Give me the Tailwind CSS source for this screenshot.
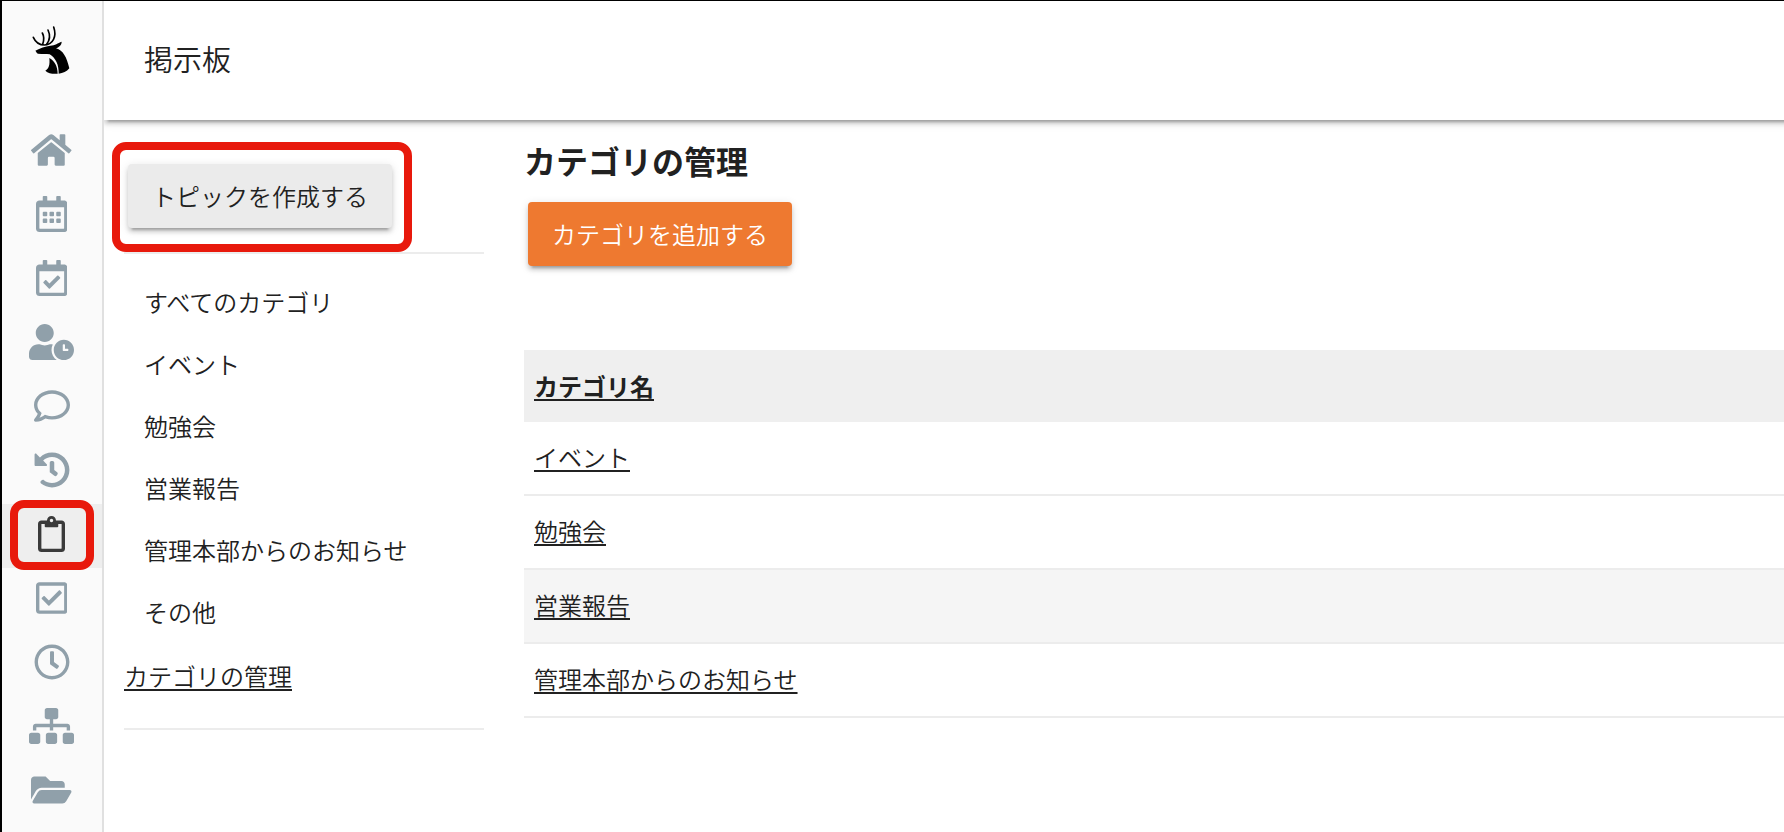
<!DOCTYPE html>
<html lang="ja">
<head>
<meta charset="utf-8">
<meta name="viewport" content="width=device-width, initial-scale=1">
<title>掲示板</title>
<script src="https://cdn.jsdelivr.net/npm/@tailwindcss/browser@4"></script>
</head>
<body class="flex min-h-screen overflow-x-hidden border-t border-l-2 border-black bg-white font-['Noto_Sans_CJK_JP',sans-serif] text-2xl font-[350] text-[#212121]">

<nav aria-label="メインメニュー" class="relative z-10 flex w-[102px] shrink-0 flex-col border-r-2 border-[#e0e0e0] bg-[#fafafa] text-[#90a0aa]">
  <a href="#" aria-label="トップ" class="flex h-[119px] justify-center pt-[22px] pr-0.5 text-black">
    <svg class="h-[54px] w-[42px]" viewBox="30 25 126 162" fill="none">
      <g stroke="currentColor" stroke-width="5" stroke-linecap="round">
        <path d="M40 68C47 84 59 91 74 91C99 89 111 66 101 37"/>
        <path d="M67 55C73 66 72 78 68 89"/>
        <path d="M84 46C91 61 89 77 80 89"/>
      </g>
      <path fill="currentColor" d="M46 108C61 100 75 95 91 93C106 92 113 85 125 81C125 92 116 98 108 101C130 108 140 127 148 161C140 171 129 176 116 177C117 151 107 130 89 119C78 117 68 119 54 117C50 115 49 111 46 108Z"/>
      <path fill="currentColor" d="M88 130C105 140 112 154 113 177C99 178 85 177 76 168C87 161 90 151 88 130Z"/>
    </svg>
  </a>
  <a href="#" aria-label="ホーム" class="flex h-16 items-center justify-center pr-px pb-1"><svg class="h-9 w-auto" viewBox="0 0 576 512" fill="currentColor"><path d="M280.37 148.26L96 300.11V464a16 16 0 0 0 16 16l112.06-.29a16 16 0 0 0 15.92-16V368a16 16 0 0 1 16-16h64a16 16 0 0 1 16 16v95.64a16 16 0 0 0 16 16.05L464 480a16 16 0 0 0 16-16V300L295.67 148.26a12.19 12.19 0 0 0-15.3 0zM571.6 251.47L488 182.56V44.05a12 12 0 0 0-12-12h-56a12 12 0 0 0-12 12v72.61L318.47 43a48 48 0 0 0-61 0L4.34 251.47a12 12 0 0 0-1.6 16.9l25.5 31A12 12 0 0 0 45.15 301l235.22-193.74a12.19 12.19 0 0 1 15.3 0L530.9 301a12 12 0 0 0 16.9-1.6l25.5-31a12 12 0 0 0-1.7-16.93z"/></svg></a>
  <a href="#" aria-label="カレンダー" class="flex h-16 items-center justify-center pr-px pb-1"><svg class="h-9 w-auto" viewBox="0 0 448 512" fill="currentColor"><path d="M148 288h-40c-6.6 0-12-5.4-12-12v-40c0-6.6 5.4-12 12-12h40c6.6 0 12 5.4 12 12v40c0 6.6-5.4 12-12 12zm108-12v-40c0-6.6-5.4-12-12-12h-40c-6.6 0-12 5.4-12 12v40c0 6.6 5.4 12 12 12h40c6.6 0 12-5.4 12-12zm96 0v-40c0-6.6-5.4-12-12-12h-40c-6.6 0-12 5.4-12 12v40c0 6.6 5.4 12 12 12h40c6.6 0 12-5.4 12-12zm-96 96v-40c0-6.6-5.4-12-12-12h-40c-6.6 0-12 5.4-12 12v40c0 6.6 5.4 12 12 12h40c6.6 0 12-5.4 12-12zm-96 0v-40c0-6.6-5.4-12-12-12h-40c-6.6 0-12 5.4-12 12v40c0 6.6 5.4 12 12 12h40c6.6 0 12-5.4 12-12zm192 0v-40c0-6.6-5.4-12-12-12h-40c-6.6 0-12 5.4-12 12v40c0 6.6 5.4 12 12 12h40c6.6 0 12-5.4 12-12zm96-260v352c0 26.5-21.5 48-48 48H48c-26.5 0-48-21.5-48-48V112c0-26.5 21.5-48 48-48h48V12c0-6.6 5.4-12 12-12h40c6.6 0 12 5.4 12 12v52h128V12c0-6.6 5.4-12 12-12h40c6.6 0 12 5.4 12 12v52h48c26.5 0 48 21.5 48 48zm-48 346V160H48v298c0 3.3 2.7 6 6 6h340c3.3 0 6-2.7 6-6z"/></svg></a>
  <a href="#" aria-label="予定の確認" class="flex h-16 items-center justify-center pr-px pb-1"><svg class="h-9 w-auto" viewBox="0 0 448 512" fill="currentColor"><path d="M400 64h-48V12c0-6.627-5.373-12-12-12h-40c-6.627 0-12 5.373-12 12v52H160V12c0-6.627-5.373-12-12-12h-40c-6.627 0-12 5.373-12 12v52H48C21.49 64 0 85.49 0 112v352c0 26.51 21.49 48 48 48h352c26.51 0 48-21.49 48-48V112c0-26.51-21.49-48-48-48zm-6 400H54a6 6 0 0 1-6-6V160h352v298a6 6 0 0 1-6 6zm-52.849-200.65L198.842 404.519c-4.705 4.667-12.303 4.637-16.971-.068l-75.091-75.699c-4.667-4.705-4.637-12.303.068-16.971l22.719-22.536c4.705-4.667 12.303-4.637 16.97.069l44.104 44.461 111.072-110.181c4.705-4.667 12.303-4.637 16.971.068l22.536 22.718c4.667 4.705 4.636 12.303-.069 16.97z"/></svg></a>
  <a href="#" aria-label="勤怠" class="flex h-16 items-center justify-center pr-px pb-1"><svg class="h-9 w-auto" viewBox="0 0 640 512" fill="currentColor"><path d="M496 224c-79.6 0-144 64.4-144 144s64.4 144 144 144 144-64.4 144-144-64.4-144-144-144zm64 150.3c0 5.3-4.4 9.7-9.7 9.7h-60.6c-5.3 0-9.7-4.4-9.7-9.7v-76.6c0-5.3 4.4-9.7 9.7-9.7h12.6c5.3 0 9.7 4.4 9.7 9.7V352h38.3c5.3 0 9.7 4.4 9.7 9.7v12.6zM320 368c0-27.8 6.7-54.1 18.2-77.5-8-1.5-16.2-2.5-24.6-2.5h-16.7c-22.2 10.2-46.9 16-72.9 16s-50.6-5.8-72.9-16h-16.7C60.2 288 0 348.2 0 422.4V464c0 26.5 21.5 48 48 48h347.1c-45.3-31.9-75.1-84.5-75.1-144zm-96-112c70.7 0 128-57.3 128-128S294.7 0 224 0 96 57.3 96 128s57.3 128 128 128z"/></svg></a>
  <a href="#" aria-label="チャット" class="flex h-16 items-center justify-center pr-px pb-1"><svg class="h-9 w-auto" viewBox="0 0 512 512" fill="currentColor"><path d="M256 32C114.6 32 0 125.1 0 240c0 47.6 19.9 91.2 52.9 126.3C38 405.7 7 439.1 6.5 439.5c-6.6 7-8.4 17.2-4.6 26S14.4 480 24 480c61.5 0 110-25.7 139.1-46.3C192 442.8 223.2 448 256 448c141.4 0 256-93.1 256-208S397.4 32 256 32zm0 368c-26.7 0-53.1-4.1-78.4-12.1l-22.7-7.2-19.5 13.8c-14.3 10.1-33.9 21.4-57.5 29 7.3-12.1 14.4-25.7 19.9-40.2l10.6-28.1-20.6-21.8C69.7 314.1 48 282.2 48 240c0-88.2 93.3-160 208-160s208 71.8 208 160-93.3 160-208 160z"/></svg></a>
  <a href="#" aria-label="履歴" class="flex h-16 items-center justify-center pr-px pb-1"><svg class="h-9 w-auto" viewBox="0 0 512 512" fill="currentColor"><path d="M504 255.531c.253 136.64-111.18 248.372-247.82 248.468-59.015.042-113.223-20.53-155.822-54.911-11.077-8.94-11.905-25.541-1.839-35.607l11.267-11.267c8.609-8.609 22.353-9.551 31.891-1.984C173.062 425.135 212.781 440 256 440c101.705 0 184-82.311 184-184 0-101.705-82.311-184-184-184-48.814 0-93.149 18.969-126.068 49.932l50.754 50.754c10.08 10.08 2.941 27.314-11.313 27.314H24c-8.837 0-16-7.163-16-16V38.627c0-14.254 17.234-21.393 27.314-11.314l49.372 49.372C129.209 34.136 189.552 8 256 8c136.81 0 247.747 110.78 248 247.531zm-180.912 78.784l9.823-12.63c8.138-10.463 6.253-25.542-4.21-33.679L288 256.349V152c0-13.255-10.745-24-24-24h-16c-13.255 0-24 10.745-24 24v135.651l65.409 50.874c10.463 8.137 25.541 6.253 33.679-4.21z"/></svg></a>
  <a href="#" aria-label="掲示板" aria-current="page" class="relative flex h-16 items-center justify-center bg-[#eeeeee] pr-px pb-1 text-[#3a3a3a]"><svg class="h-9 w-auto" viewBox="0 0 384 512" fill="currentColor"><path d="M336 64h-80c0-35.3-28.7-64-64-64s-64 28.7-64 64H48C21.5 64 0 85.5 0 112v352c0 26.5 21.5 48 48 48h288c26.5 0 48-21.5 48-48V112c0-26.5-21.5-48-48-48zM192 40c13.3 0 24 10.7 24 24s-10.7 24-24 24-24-10.7-24-24 10.7-24 24-24zm144 418c0 3.3-2.7 6-6 6H54c-3.3 0-6-2.7-6-6V118c0-3.3 2.7-6 6-6h42v36c0 6.6 5.4 12 12 12h168c6.6 0 12-5.4 12-12v-36h42c3.3 0 6 2.7 6 6z"/></svg><span class="absolute inset-x-2 -top-1 -bottom-0.5 rounded-[14px] border-8 border-[#e8190c]"></span></a>
  <a href="#" aria-label="タスク" class="flex h-16 items-center justify-center pr-px pb-1"><svg class="h-9 w-auto" viewBox="0 0 448 512" fill="currentColor"><path d="M400 32H48C21.49 32 0 53.49 0 80v352c0 26.51 21.49 48 48 48h352c26.51 0 48-21.49 48-48V80c0-26.51-21.49-48-48-48zm0 400H48V80h352v352zm-35.864-241.724L191.547 361.48c-4.705 4.667-12.303 4.637-16.97-.068l-90.781-91.516c-4.667-4.705-4.637-12.303.069-16.971l22.719-22.536c4.705-4.667 12.303-4.637 16.97.069l59.792 60.277 141.352-140.216c4.705-4.667 12.303-4.637 16.97.068l22.536 22.718c4.667 4.706 4.637 12.304-.068 16.971z"/></svg></a>
  <a href="#" aria-label="タイムカード" class="flex h-16 items-center justify-center pr-px pb-1"><svg class="h-9 w-auto" viewBox="0 0 512 512" fill="currentColor"><path d="M256 8C119 8 8 119 8 256s111 248 248 248 248-111 248-248S393 8 256 8zm0 448c-110.5 0-200-89.5-200-200S145.5 56 256 56s200 89.5 200 200-89.5 200-200 200zm61.8-104.4l-84.9-61.7c-3.1-2.3-4.9-5.9-4.9-9.7V116c0-6.6 5.4-12 12-12h32c6.6 0 12 5.4 12 12v141.7l66.8 48.6c5.4 3.9 6.5 11.4 2.6 16.8L334.6 349c-3.9 5.3-11.4 6.5-16.8 2.6z"/></svg></a>
  <a href="#" aria-label="組織図" class="flex h-16 items-center justify-center pr-px pb-1"><svg class="h-9 w-auto" viewBox="0 0 640 512" fill="currentColor"><path d="M128 352H32c-17.67 0-32 14.33-32 32v96c0 17.67 14.33 32 32 32h96c17.67 0 32-14.33 32-32v-96c0-17.67-14.33-32-32-32zm-24-80h192v48h48v-48h192v48h48v-57.59c0-21.17-17.23-38.41-38.41-38.41H344v-64h40c17.67 0 32-14.33 32-32V32c0-17.67-14.33-32-32-32H256c-17.67 0-32 14.33-32 32v96c0 17.67 14.33 32 32 32h40v64H94.41C73.23 224 56 241.23 56 262.41V320h48v-48zm264 80h-96c-17.67 0-32 14.33-32 32v96c0 17.67 14.33 32 32 32h96c17.67 0 32-14.33 32-32v-96c0-17.67-14.33-32-32-32zm240 0h-96c-17.67 0-32 14.33-32 32v96c0 17.67 14.33 32 32 32h96c17.67 0 32-14.33 32-32v-96c0-17.67-14.33-32-32-32z"/></svg></a>
  <a href="#" aria-label="ファイル" class="flex h-16 items-center justify-center pr-px pb-1"><svg class="h-9 w-auto" viewBox="0 0 576 512" fill="currentColor"><path d="M572.694 292.093L500.27 416.248A63.997 63.997 0 0 1 444.989 448H45.025c-18.523 0-30.064-20.093-20.731-36.093l72.424-124.155A64 64 0 0 1 152 256h399.964c18.523 0 30.064 20.093 20.73 36.093zM152 224h328v-48c0-26.51-21.49-48-48-48H272l-64-64H48C21.49 64 0 85.49 0 112v278.046l69.077-118.418C86.214 242.25 117.989 224 152 224z"/></svg></a>
</nav>

<div class="flex min-w-0 grow flex-col">
  <header class="-mr-3 flex h-[119px] items-center px-10 pb-1 shadow-[0_6px_2px_-4px_rgba(0,0,0,0.2),0_4px_4px_0_rgba(0,0,0,0.14),0_2px_10px_0_rgba(0,0,0,0.12)]">
    <h1 class="text-[29px]">掲示板</h1>
  </header>

  <div class="flex grow gap-10 pl-5">
    <aside class="w-[360px] shrink-0">
      <div class="flex border-b-2 border-[#ececec] px-1 pt-11 pb-6">
        <div class="relative">
          <button type="button" class="h-16 rounded bg-[#ebebeb] px-6 shadow-[0_6px_2px_-4px_rgba(0,0,0,0.2),0_4px_4px_0_rgba(0,0,0,0.14),0_2px_10px_0_rgba(0,0,0,0.12)]">トピックを作成する</button>
          <span class="pointer-events-none absolute -top-[22px] -right-5 -bottom-6 -left-4 rounded-[14px] border-8 border-[#e8190c]"></span>
        </div>
      </div>
      <ul class="pt-[17px] pl-5">
        <li><a href="#" class="flex h-[62px] items-center">すべてのカテゴリ</a></li>
        <li><a href="#" class="flex h-[62px] items-center">イベント</a></li>
        <li><a href="#" class="flex h-[62px] items-center">勉強会</a></li>
        <li><a href="#" class="flex h-[62px] items-center">営業報告</a></li>
        <li><a href="#" class="flex h-[62px] items-center">管理本部からのお知らせ</a></li>
        <li><a href="#" class="flex h-[62px] items-center">その他</a></li>
      </ul>
      <div class="border-b-2 border-[#ececec] pt-[17px] pb-9">
        <a href="#" class="underline decoration-2 underline-offset-3 [text-decoration-skip-ink:none]">カテゴリの管理</a>
      </div>
    </aside>

    <main class="min-w-0 grow pt-[18px]">
      <h2 class="text-[32px] leading-[44px] font-bold">カテゴリの管理</h2>
      <button type="button" class="mt-5 ml-1 block h-16 rounded bg-[#ee7930] px-6 text-white shadow-[0_6px_2px_-4px_rgba(0,0,0,0.2),0_4px_4px_0_rgba(0,0,0,0.14),0_2px_10px_0_rgba(0,0,0,0.12)]">カテゴリを追加する</button>
      <table class="mt-[84px] w-full border-separate border-spacing-0 text-left">
        <thead>
          <tr class="bg-[#efefef]"><th class="h-[72px] px-2.5 font-bold"><a href="#" class="underline decoration-2 underline-offset-3 [text-decoration-skip-ink:none]">カテゴリ名</a></th></tr>
        </thead>
        <tbody>
          <tr><td class="h-[74px] border-b-2 border-[#ececec] px-2.5 pb-0.5"><a href="#" class="underline decoration-2 underline-offset-3 [text-decoration-skip-ink:none]">イベント</a></td></tr>
          <tr><td class="h-[74px] border-b-2 border-[#ececec] px-2.5 pb-0.5"><a href="#" class="underline decoration-2 underline-offset-3 [text-decoration-skip-ink:none]">勉強会</a></td></tr>
          <tr class="bg-[#f5f5f5]"><td class="h-[74px] border-b-2 border-[#ececec] px-2.5 pb-0.5"><a href="#" class="underline decoration-2 underline-offset-3 [text-decoration-skip-ink:none]">営業報告</a></td></tr>
          <tr><td class="h-[74px] border-b-2 border-[#ececec] px-2.5 pb-0.5"><a href="#" class="underline decoration-2 underline-offset-3 [text-decoration-skip-ink:none]">管理本部からのお知らせ</a></td></tr>
        </tbody>
      </table>
    </main>
  </div>
</div>
</body>
</html>
